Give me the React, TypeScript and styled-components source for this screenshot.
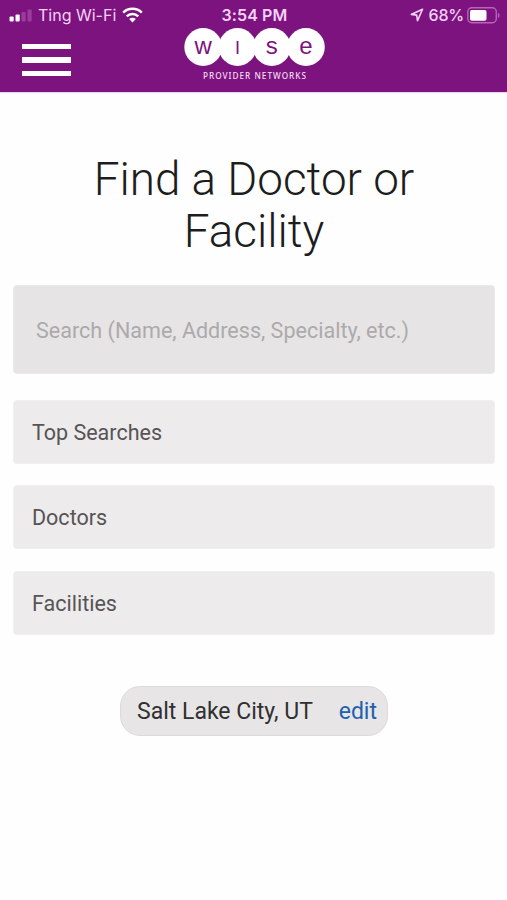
import React from "react";
import styled, { createGlobalStyle } from "styled-components";

const GlobalStyle = createGlobalStyle`
  *, *::before, *::after { box-sizing: border-box; }
  body { margin: 0; background: #fff; font-family: Roboto, sans-serif; }
`;

const Screen = styled.div`
  display: flex;
  flex-direction: column;
  min-height: 900px;
  background: #fefefe;
`;

const Header = styled.header`
  height: 92px;
  background: #7d137e;
  box-shadow: 0 1px 1px #ecd5ee;
`;

const StatusBar = styled.div`
  display: grid;
  grid-template-columns: 1fr auto 1fr;
  align-items: center;
  height: 28px;
  padding: 1px 7px 0 9px;
  color: #f5d2f7;
  font: 500 16px/28px Inter, sans-serif;
`;

const StatusGroup = styled.div<{ $end?: boolean }>`
  display: flex;
  align-items: center;
  justify-content: ${(p) => (p.$end ? "flex-end" : "flex-start")};
`;

const Carrier = styled.span`
  margin: 0 6px 0 6px;
  font-weight: 400;
  font-size: 16px;
`;

const Clock = styled.span`
  font-weight: 600;
  font-size: 16px;
  letter-spacing: 0.1px;
`;

const Percent = styled.span`
  margin: 0 3px 0 5px;
  font-size: 16px;
  letter-spacing: -0.2px;
`;

const NavBar = styled.div`
  display: grid;
  grid-template-columns: 1fr 142px 1fr;
  padding: 0 22px;
`;

const MenuButton = styled.button`
  display: flex;
  flex-direction: column;
  gap: 8px;
  width: 49px;
  margin: 15.5px 0 0;
  padding: 0;
  border: 0;
  background: none;
`;

const MenuLine = styled.span`
  display: block;
  height: 5.5px;
  background: #fff;
`;

const Logo = styled.svg`
  display: block;
  width: 142px;
  height: 54px;
  margin-left: 1px;
`;

const Main = styled.main`
  display: flex;
  flex-direction: column;
  padding: 62px 12px 0 13px;
`;

const Title = styled.h1`
  margin: 0;
  text-align: center;
  font-weight: 300;
  font-size: 45.8px;
  line-height: 52px;
  color: #1d1d1d;
`;

const SearchInput = styled.input`
  width: 100%;
  height: 89px;
  margin-top: 27px;
  padding: 1px 22px 0;
  border: 1px solid #ebe9ea;
  border-radius: 4px;
  background: #e6e4e5;
  font: 400 21.55px Roboto, sans-serif;
  &::placeholder { color: #acaaab; opacity: 1; }
`;

const Options = styled.nav`
  display: flex;
  flex-direction: column;
  gap: 21.5px;
  margin-top: 25.5px;
`;

const Option = styled.button`
  height: 64px;
  padding: 1px 18px 0;
  border: 1px solid #f1eff0;
  border-radius: 4px;
  background: #edebec;
  color: #565455;
  text-align: left;
  font: 400 21.5px Roboto, sans-serif;
`;

const LocationPill = styled.div`
  display: flex;
  align-items: center;
  justify-content: space-between;
  align-self: center;
  width: 268px;
  height: 50px;
  margin-top: 51px;
  padding: 1px 10px 0 16px;
  border: 1px solid #dcdadb;
  border-radius: 20px;
  background: #e7e5e6;
  color: #303030;
  font-size: 23px;
`;

const EditLink = styled.a`
  color: #225fae;
`;

const SignalIcon = () => (
  <svg width="23" height="13" viewBox="0 0 23 13">
    <rect x="0.5" y="7.5" width="4.2" height="5" rx="1" fill="#fff" />
    <rect x="6.5" y="5.5" width="4.2" height="7" rx="1" fill="#fff" />
    <rect x="12.5" y="3" width="4.2" height="9.5" rx="1" fill="#9b3c9d" />
    <rect x="18.5" y="0.5" width="4.2" height="12" rx="1" fill="#9b3c9d" />
  </svg>
);

const WifiIcon = () => (
  <svg width="21" height="16" viewBox="0 0 21 16" fill="none" stroke="#fff" strokeWidth="2.5">
    <path d="M1.2 5.7a13.2 13.2 0 0 1 18.6 0" />
    <path d="M4.7 9.3a8.2 8.2 0 0 1 11.6 0" />
    <path d="M7.2 12a4.7 4.7 0 0 1 6.6 0L10.5 15.4Z" fill="#fff" stroke="none" />
  </svg>
);

const LocationIcon = () => (
  <svg width="14" height="14" viewBox="0 0 14 14" fill="none" stroke="#f5d2f7" strokeWidth="1.6" strokeLinejoin="round">
    <path d="M12.5 1.2 1.3 6.4 6.7 7.1 7.5 12.7Z" />
  </svg>
);

const BatteryIcon = () => (
  <svg width="33" height="17" viewBox="0 0 33 17">
    <rect x="0.8" y="0.8" width="28.5" height="15" rx="4" fill="none" stroke="#b765ba" strokeWidth="1.4" />
    <rect x="3" y="3" width="16.5" height="10.8" rx="1.8" fill="#fff" />
    <path d="M31 5.7c2 .8 2 4.6 0 5.4Z" fill="#b765ba" />
  </svg>
);

const circles = [
  { x: 19.2, letter: "w", size: 24 },
  { x: 53.5, letter: "I", size: 18 },
  { x: 87.8, letter: "s", size: 24 },
  { x: 121.9, letter: "e", size: 24 },
];

const WiseLogo = () => (
  <Logo viewBox="0 0 142 54" role="img" aria-label="Wise Provider Networks">
    {circles.map((c) => (
      <circle key={c.letter} cx={c.x} cy="19" r="18.9" fill="#fff" />
    ))}
    <g fill="#7d137e" fontFamily="Liberation Sans, sans-serif" textAnchor="middle">
      {circles.map((c) => (
        <text key={c.letter} x={c.x} y="26" fontSize={c.size}>{c.letter}</text>
      ))}
    </g>
    <text x="19" y="51" textLength="103" fill="#f5dff6" fontFamily="Noto Sans, sans-serif" fontSize="8.2" fontWeight="500">
      PROVIDER NETWORKS
    </text>
  </Logo>
);

const options = ["Top Searches", "Doctors", "Facilities"];

export default function App() {
  return (
    <Screen>
      <GlobalStyle />
      <Header>
        <StatusBar>
          <StatusGroup>
            <SignalIcon />
            <Carrier>Ting Wi-Fi</Carrier>
            <WifiIcon />
          </StatusGroup>
          <Clock>3:54 PM</Clock>
          <StatusGroup $end>
            <LocationIcon />
            <Percent>68%</Percent>
            <BatteryIcon />
          </StatusGroup>
        </StatusBar>
        <NavBar>
          <MenuButton aria-label="Menu">
            <MenuLine />
            <MenuLine />
            <MenuLine />
          </MenuButton>
          <WiseLogo />
        </NavBar>
      </Header>
      <Main>
        <Title>Find a Doctor or<br />Facility</Title>
        <SearchInput placeholder="Search (Name, Address, Specialty, etc.)" />
        <Options>
          {options.map((label) => (
            <Option key={label}>{label}</Option>
          ))}
        </Options>
        <LocationPill>
          <span>Salt Lake City, UT</span>
          <EditLink>edit</EditLink>
        </LocationPill>
      </Main>
    </Screen>
  );
}
